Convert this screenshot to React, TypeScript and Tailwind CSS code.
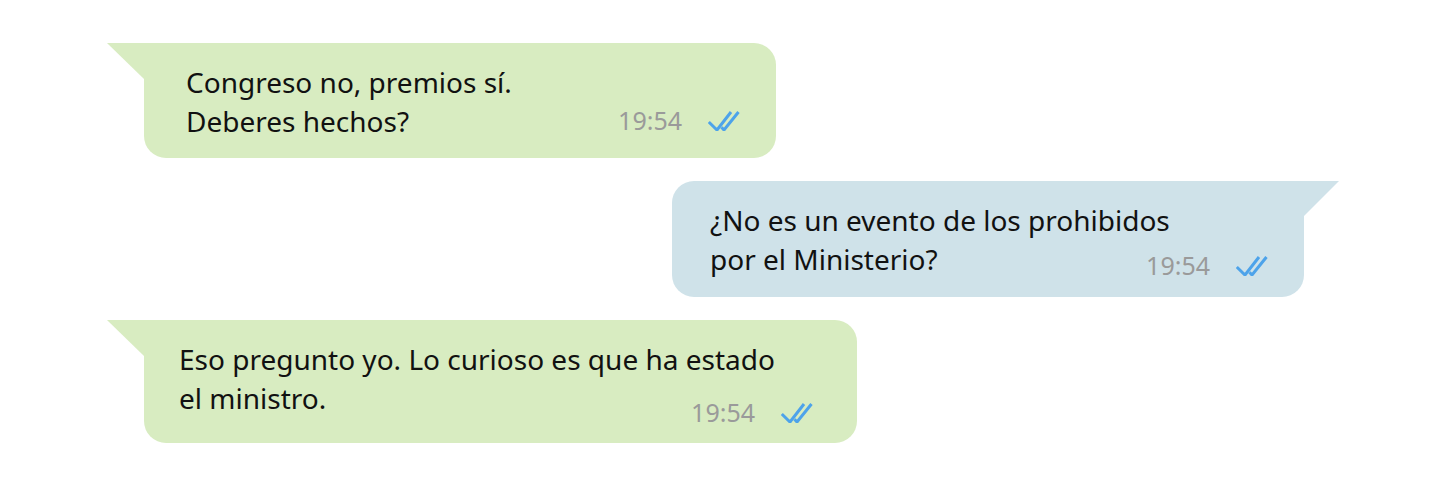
import React from "react";

type Msg = {
  id: number;
  lines: string[];
  time: string;
  side: "in" | "out";
};

const messages: Msg[] = [
  { id: 1, lines: ["Congreso no, premios sí.", "Deberes hechos?"], time: "19:54", side: "in" },
  { id: 2, lines: ["¿No es un evento de los prohibidos", "por el Ministerio?"], time: "19:54", side: "out" },
  { id: 3, lines: ["Eso pregunto yo. Lo curioso es que ha estado", "el ministro."], time: "19:54", side: "in" },
];

function DoubleCheck() {
  return (
    <svg width="32" height="20" viewBox="0 0 32 20" fill="none" className="shrink-0">
      <polyline points="0.8,11 9,19 23,1" stroke="#4da3ea" strokeWidth="3" />
      <polyline points="13.5,16.2 16,19 30.5,1" stroke="#4da3ea" strokeWidth="3" />
    </svg>
  );
}

function Tail({ side, color }: { side: "in" | "out"; color: string }) {
  if (side === "in") {
    return (
      <svg width="38" height="36" viewBox="0 0 38 36" className="absolute top-0 left-[-37px]">
        <polygon points="0,0 38,0 38,36 37,36" fill={color} />
      </svg>
    );
  }
  return (
    <svg width="38" height="36" viewBox="0 0 38 36" className="absolute top-0 right-[-36px]">
      <polygon points="0,0 37,0 1,36 0,36" fill={color} />
    </svg>
  );
}

// hora + doble check, subido sobre la última línea
function Meta({ time, className }: { time: string; className: string }) {
  return (
    <div className={"flex items-center justify-end gap-[26px] " + className}>
      <span className="text-[25px] leading-[25px] text-[#9a9a9a]">{time}</span>
      <DoubleCheck />
    </div>
  );
}

export default function App() {
  return (
    <div className="min-h-[488px] w-[1450px] bg-white font-['Noto_Sans',sans-serif] text-[#111]">
      <div className="flex flex-col gap-[23px] pt-[43px]">
        {/* entrante 1 */}
        <div className="relative ml-[144px] w-[632px] rounded-[22px] rounded-tl-none bg-[#d8ecc1] pt-[20px] pr-[36px] pb-[25px] pl-[42px]">
          <Tail side="in" color="#d8ecc1" />
          <p className="whitespace-nowrap text-[28px] leading-[39px]">
            {messages[0].lines[0]}
            <br />
            {messages[0].lines[1]}
          </p>
          <Meta time={messages[0].time} className="mt-[-33px]" />
        </div>

        {/* saliente */}
        <div className="relative mr-[146px] w-[632px] self-end rounded-[22px] rounded-tr-none bg-[#cfe2e9] pt-[20px] pr-[36px] pb-[19px] pl-[38px]">
          <Tail side="out" color="#cfe2e9" />
          <p className="whitespace-nowrap text-[28px] leading-[39px]">
            {messages[1].lines[0]}
            <br />
            {messages[1].lines[1]}
          </p>
          <Meta time={messages[1].time} className="mt-[-26px]" />
        </div>

        {/* entrante 2 */}
        <div className="relative ml-[144px] w-[713px] rounded-[22px] rounded-tl-none bg-[#d8ecc1] pt-[20px] pr-[44px] pb-[18px] pl-[35px]">
          <Tail side="in" color="#d8ecc1" />
          <p className="whitespace-nowrap text-[28px] leading-[39px]">
            {messages[2].lines[0]}
            <br />
            {messages[2].lines[1]}
          </p>
          <Meta time={messages[2].time} className="mt-[-18px]" />
        </div>
      </div>
    </div>
  );
}
